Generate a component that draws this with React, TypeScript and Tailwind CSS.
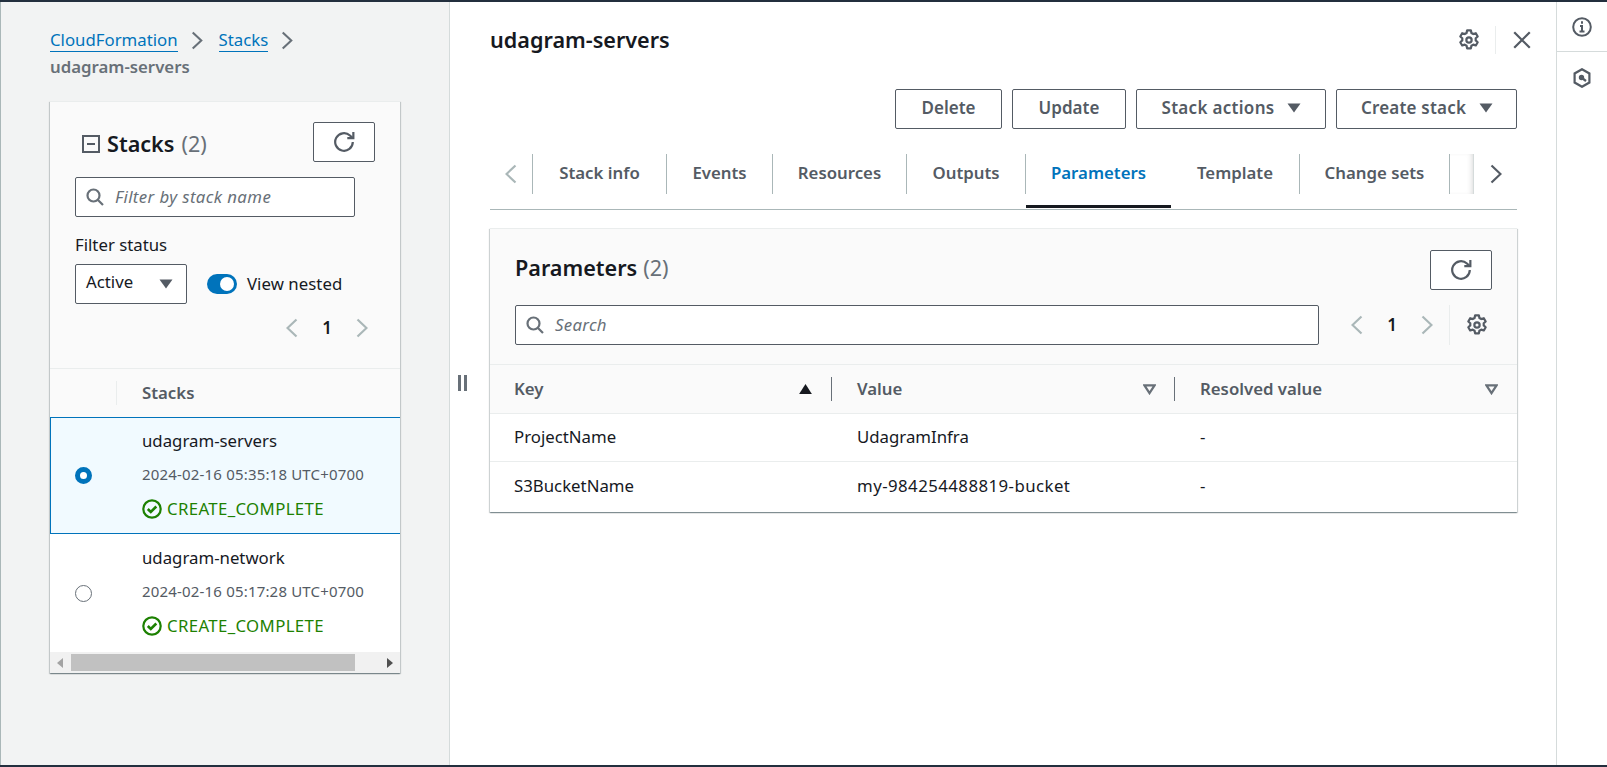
import React from "react";

const Chevron = ({ dir, cls }: { dir: "l" | "r"; cls: string }) => (
  <svg viewBox="0 0 12 20" className={cls} fill="none" stroke="currentColor" strokeWidth="2.2">
    <path d={dir === "r" ? "M1.5 1.5l9 8.5-9 8.5" : "M10.5 1.5l-9 8.5 9 8.5"} />
  </svg>
);

const Gear = ({ cls }: { cls: string }) => (
  <svg viewBox="0 0 20 20" className={cls} fill="none" stroke="currentColor" strokeWidth="2" strokeLinejoin="round">
    <path d="M8.3 1.2h3.4l.5 2.4 1.7 1 2.3-.8 1.7 3-1.8 1.6v2l1.8 1.6-1.7 3-2.3-.8-1.7 1-.5 2.4H8.3l-.5-2.4-1.7-1-2.3.8-1.7-3 1.8-1.6v-2L2.1 6.8l1.7-3 2.3.8 1.7-1z" />
    <circle cx="10" cy="10" r="2.4" />
  </svg>
);

const Refresh = () => (
  <svg viewBox="0 0 20 20" className="w-[22px] h-[22px] text-[#545b64]" fill="none" stroke="currentColor" strokeWidth="2">
    <path d="M18 10a8 8 0 1 1-2.6-5.9L17.5 6" />
    <path d="M18.5 1v5.5H13" />
  </svg>
);

const Search = () => (
  <svg viewBox="0 0 18 18" className="w-[18px] h-[18px] text-[#687078] shrink-0" fill="none" stroke="currentColor" strokeWidth="2.2">
    <circle cx="7.5" cy="7.5" r="6" />
    <path d="M12 12l5 5" />
  </svg>
);

const CaretDown = ({ cls = "w-[14px] h-[10px]" }: { cls?: string }) => (
  <svg viewBox="0 0 14 10" className={cls + " text-[#545b64]"} fill="currentColor">
    <path d="M0.5 0.5h13L7 9.5z" />
  </svg>
);

const SortOutline = () => (
  <svg viewBox="0 0 14 12" className="w-[13px] h-[11px] text-[#687078]" fill="none" stroke="currentColor" strokeWidth="2.4">
    <path d="M1.5 1.5h11L7 10z" />
  </svg>
);

const CheckCircle = () => (
  <svg viewBox="0 0 20 20" className="w-5 h-5 text-[#1d8102] shrink-0" fill="none" stroke="currentColor" strokeWidth="2.2">
    <circle cx="10" cy="10" r="8.7" />
    <path d="M5.8 10l3 3 5.5-5.5" strokeWidth="2.6" />
  </svg>
);

const OutlineButton = ({ children, cls = "" }: { children: React.ReactNode; cls?: string }) => (
  <div className={"h-10 rounded-[2px] border border-[#545b64] bg-white flex items-center justify-center gap-[13px] text-[17px] font-semibold text-[#545b64] " + cls}>
    {children}
  </div>
);

const RefreshButton = () => (
  <OutlineButton cls="w-[62px]">
    <Refresh />
  </OutlineButton>
);

const Pager = () => (
  <div className="flex items-center gap-[23px]">
    <Chevron dir="l" cls="w-[12px] h-[20px] text-[#aab7b8]" />
    <span className="w-3 text-center text-[17px] font-semibold text-[#16191f]">1</span>
    <Chevron dir="r" cls="w-[12px] h-[20px] text-[#aab7b8]" />
  </div>
);

const stacks = [
  { name: "udagram-servers", time: "2024-02-16 05:35:18 UTC+0700", selected: true },
  { name: "udagram-network", time: "2024-02-16 05:17:28 UTC+0700", selected: false },
];

const tabs = [
  { label: "Stack info", w: "w-[134px]" },
  { label: "Events", w: "w-[106px]" },
  { label: "Resources", w: "w-[134px]" },
  { label: "Outputs", w: "w-[119px]" },
  { label: "Parameters", w: "w-[145px]", active: true },
  { label: "Template", w: "w-[129px]" },
  { label: "Change sets", w: "w-[150px]" },
];

const rows = [
  { k: "ProjectName", v: "UdagramInfra", r: "-", h: "h-[48px]", vc: "" },
  { k: "S3BucketName", v: "my-984254488819-bucket", r: "-", h: "h-[50px]", vc: "tracking-[0.45px]" },
];

export default function App() {
  return (
    <div className="w-[1607px] h-[767px] overflow-hidden flex flex-col bg-white border-t-2 border-b-2 border-[#232f3e] font-['Noto_Sans',sans-serif] text-[16.8px] text-[#16191f]">
      <div className="flex flex-1 min-h-0">
        {/* Left panel */}
        <aside className="w-[450px] shrink-0 bg-[#f2f3f3] border-l border-l-[#aab7b8] border-r border-r-[#d5dbdb] pl-[49px] pr-[49px] pt-[25px] flex flex-col">
          <div className="h-[47px]">
            <div className="flex items-center h-[26px]">
              <span className="text-[#0073bb] border-b border-[#0073bb] leading-[22px]">CloudFormation</span>
              <Chevron dir="r" cls="w-[12px] h-[19px] ml-[13px] mr-[16px] text-[#687078]" />
              <span className="text-[#0073bb] border-b border-[#0073bb] leading-[22px]">Stacks</span>
              <Chevron dir="r" cls="w-[12px] h-[19px] ml-[13px] text-[#687078]" />
            </div>
            <div className="font-semibold text-[#687078] leading-[26px] pt-[1px]">udagram-servers</div>
          </div>

          <div className="mt-[27px] w-[350px] bg-white border-t border-[#eaeded] shadow-[0_1px_1px_0_rgba(0,28,36,0.3),1px_1px_1px_0_rgba(0,28,36,0.15),-1px_1px_1px_0_rgba(0,28,36,0.15)]">
            <div className="h-[267px] bg-[#fafafa] border-b border-[#eaeded] pl-[25px] pr-[25px] pt-[20px]">
              <div className="flex items-center justify-between h-[40px]">
                <div className="flex items-center pl-[7px] pt-[5px]">
                  <svg viewBox="0 0 18 18" className="w-[18px] h-[18px] text-[#545b64]" fill="none" stroke="currentColor" strokeWidth="2">
                    <rect x="1" y="1" width="16" height="16" />
                    <path d="M5 9h8" />
                  </svg>
                  <span className="ml-[7px] text-[21.6px] font-semibold">Stacks</span>
                  <span className="ml-[7px] text-[21.6px] text-[#687078]">(2)</span>
                </div>
                <RefreshButton />
              </div>
              <div className="mt-[15px] w-[280px] h-10 rounded-[2px] border border-[#545b64] bg-white flex items-center pl-[10px] gap-[11px]">
                <Search />
                <span className="italic text-[#687078] tracking-[0.4px] -mt-[1px]">Filter by stack name</span>
              </div>
              <div className="mt-[17px] leading-[22px]">Filter status</div>
              <div className="mt-[8px] flex items-center">
                <div className="w-[112px] h-10 rounded-[2px] border border-[#545b64] bg-white flex items-center justify-between pl-[10px] pr-[13px]">
                  <span className="-mt-[4px]">Active</span>
                  <CaretDown />
                </div>
                <div className="ml-[20px] w-[30px] h-5 rounded-full bg-[#0073bb] flex items-center justify-end pr-[3px]">
                  <div className="w-[14px] h-[14px] rounded-full bg-white" />
                </div>
                <span className="ml-[10px] tracking-[0.05px]">View nested</span>
              </div>
              <div className="mt-[11px] flex justify-end pr-[7px]">
                <Pager />
              </div>
            </div>
            <div className="h-[48px] bg-[#fafafa] flex items-center">
              <div className="w-[67px] h-6 border-r border-[#eaeded]" />
              <span className="ml-[25px] font-semibold text-[#545b64] -mt-[1px]">Stacks</span>
            </div>
            {stacks.map((s) => (
              <div
                key={s.name}
                className={
                  s.selected
                    ? "h-[117px] flex bg-[#f1faff] border border-r-0 border-[#0073bb]"
                    : "h-[118px] flex bg-white"
                }
              >
                <div className={(s.selected ? "w-[24px]" : "w-[25px]") + " shrink-0"} />
                <div className="w-[18px] flex items-center shrink-0">
                  {s.selected ? (
                    <div className="w-[17px] h-[17px] rounded-full border-[5px] border-[#0073bb] bg-white" />
                  ) : (
                    <div className="w-[17px] h-[17px] rounded-full border border-[#687078] bg-white" />
                  )}
                </div>
                <div className={(s.selected ? "pt-[10px]" : "pt-[11px]") + " pl-[49px] flex flex-col"}>
                  <div className="leading-[26px]">{s.name}</div>
                  <div className="mt-[8px] text-[15px] tracking-[0.18px] leading-[24px] text-[#545b64]">{s.time}</div>
                  <div className="mt-[11px] flex items-center gap-[5px] text-[#1d8102] leading-[24px] tracking-[0.35px]">
                    <CheckCircle />
                    CREATE_COMPLETE
                  </div>
                </div>
              </div>
            ))}
            <div className="h-[21px] bg-[#f1f1f1] flex items-center justify-between px-[7px]">
              <svg viewBox="0 0 6 10" className="w-[6px] h-[10px] text-[#a3a3a3]" fill="currentColor"><path d="M6 0v10L0 5z" /></svg>
              <div className="w-[284px] h-[17px] bg-[#c1c1c1] ml-[2px] mr-[26px]" />
              <svg viewBox="0 0 6 10" className="w-[6px] h-[10px] text-[#505050]" fill="currentColor"><path d="M0 0v10l6-5z" /></svg>
            </div>
          </div>
        </aside>

        {/* Resize handle */}
        <div className="w-[24px] shrink-0 flex items-center justify-center gap-[3px]">
          <div className="w-[3px] h-[16px] bg-[#687078] mb-[2px]" />
          <div className="w-[3px] h-[16px] bg-[#687078] mb-[2px]" />
        </div>

        {/* Main */}
        <main className="flex-1 min-w-0 pl-[16px] pr-[39px] pt-[16px]">
          <div className="flex items-center justify-between h-[44px]">
            <h1 className="text-[21.6px] font-semibold text-[#16191f] leading-[44px]">udagram-servers</h1>
            <div className="flex items-center -mr-[15px]">
              <Gear cls="w-[22px] h-[22px] text-[#545b64]" />
              <div className="w-px h-[28px] bg-[#eaeded] ml-[15px]" />
              <svg viewBox="0 0 18 18" className="w-[20px] h-[20px] ml-[16px] text-[#545b64]" fill="none" stroke="currentColor" strokeWidth="2">
                <path d="M2 2l14 14M16 2L2 16" />
              </svg>
            </div>
          </div>

          <div className="mt-[27px] flex justify-end gap-[10px]">
            <OutlineButton cls="w-[107px] pb-[2px]">Delete</OutlineButton>
            <OutlineButton cls="w-[114px] pb-[2px]">Update</OutlineButton>
            <OutlineButton cls="w-[190px] pb-[2px] pl-[1px]"><span className="tracking-[0.3px]">Stack actions</span><CaretDown /></OutlineButton>
            <OutlineButton cls="w-[181px] pb-[2px] pl-[1px]"><span className="tracking-[0.2px]">Create stack</span><CaretDown /></OutlineButton>
          </div>

          <div className="mt-[25px] h-[56px] border-b border-[#aab7b8] flex items-start">
            <div className="w-[43px] h-[40px] border-r border-[#aab7b8] flex items-center pl-[15px]">
              <Chevron dir="l" cls="w-[12px] h-[20px] text-[#aab7b8]" />
            </div>
            {tabs.map((t) => (
              <div
                key={t.label}
                className={
                  t.w +
                  " relative h-[40px] flex items-center justify-center font-semibold pb-[2px] " +
                  (t.active ? "text-[#0073bb]" : "text-[#545b64] border-r border-[#aab7b8]")
                }
              >
                {t.label}
                {t.active && <div className="absolute left-0 right-0 top-[51px] h-[3px] bg-[#16191f]" />}
              </div>
            ))}
            <div className="w-[24px] h-[40px] border-r border-[#d5dbdb] shadow-[inset_-4px_0_6px_-4px_rgba(0,0,0,0.2)]" />
            <div className="h-[40px] flex items-center pl-[16px]">
              <Chevron dir="r" cls="w-[12px] h-[20px] text-[#545b64]" />
            </div>
          </div>

          <section className="mt-[18px] bg-white border-t border-[#eaeded] shadow-[0_1px_1px_0_rgba(0,28,36,0.3),1px_1px_1px_0_rgba(0,28,36,0.15),-1px_1px_1px_0_rgba(0,28,36,0.15)]">
            <div className="h-[136px] bg-[#fafafa] border-b border-[#eaeded] pl-[25px] pr-[25px] pt-[21px]">
              <div className="flex items-center justify-between h-[40px]">
                <div className="text-[21.6px] pb-[3px]">
                  <span className="font-semibold">Parameters</span>
                  <span className="ml-[6px] text-[#687078]">(2)</span>
                </div>
                <RefreshButton />
              </div>
              <div className="mt-[15px] flex items-center">
                <div className="w-[804px] h-10 rounded-[2px] border border-[#545b64] bg-white flex items-center pl-[10px] gap-[11px]">
                  <Search />
                  <span className="italic text-[#687078] tracking-[0.3px] -mt-[1px]">Search</span>
                </div>
                <div className="ml-[32px]">
                  <Pager />
                </div>
                <div className="ml-[16px] w-px h-10 bg-[#eaeded]" />
                <Gear cls="ml-[16px] w-[22px] h-[22px] text-[#545b64]" />
              </div>
            </div>
            <div className="h-[49px] bg-[#fafafa] border-b border-[#eaeded] flex items-center font-semibold text-[#545b64]">
              <div className="w-[342px] h-6 border-r border-[#687078] pl-[24px] pr-[19px] flex items-center justify-between">
                <span>Key</span>
                <svg viewBox="0 0 14 11" className="w-[13px] h-[10px] text-[#16191f]" fill="currentColor"><path d="M7 0l7 11H0z" /></svg>
              </div>
              <div className="w-[343px] h-6 border-r border-[#687078] pl-[25px] pr-[18px] flex items-center justify-between">
                <span>Value</span>
                <SortOutline />
              </div>
              <div className="flex-1 h-6 pl-[25px] pr-[19px] flex items-center justify-between">
                <span>Resolved value</span>
                <SortOutline />
              </div>
            </div>
            {rows.map((r, i) => (
              <div key={r.k} className={r.h + " flex items-center pb-[2px] " + (i === 0 ? "border-b border-[#eaeded]" : "")}>
                <div className="w-[342px] pl-[24px]">{r.k}</div>
                <div className={"w-[343px] pl-[25px] " + r.vc}>{r.v}</div>
                <div className="pl-[25px]">{r.r}</div>
              </div>
            ))}
          </section>
        </main>

        {/* Right rail */}
        <div className="w-[51px] shrink-0 border-l border-[#d5dbdb]">
          <div className="h-[50px] border-b border-[#d5dbdb] flex justify-center pt-[15px]">
            <svg viewBox="0 0 20 20" className="w-5 h-5 text-[#545b64]" fill="none" stroke="currentColor" strokeWidth="2">
              <circle cx="10" cy="10" r="8.8" />
              <path d="M7.5 14.5h5M10 14.5V9H8" />
              <path d="M9 5.5h2" strokeWidth="2.4" />
            </svg>
          </div>
          <div className="flex justify-center pt-[16px]">
            <svg viewBox="0 0 18 20" className="w-[18px] h-5 text-[#545b64]" fill="none" stroke="currentColor" strokeWidth="2.2">
              <path d="M9 1.2l7.4 4.3v9L9 18.8 1.6 14.5v-9z" />
              <circle cx="8.5" cy="9.5" r="1.6" fill="currentColor" />
              <path d="M9 10l4 3" />
            </svg>
          </div>
        </div>
      </div>
    </div>
  );
}
